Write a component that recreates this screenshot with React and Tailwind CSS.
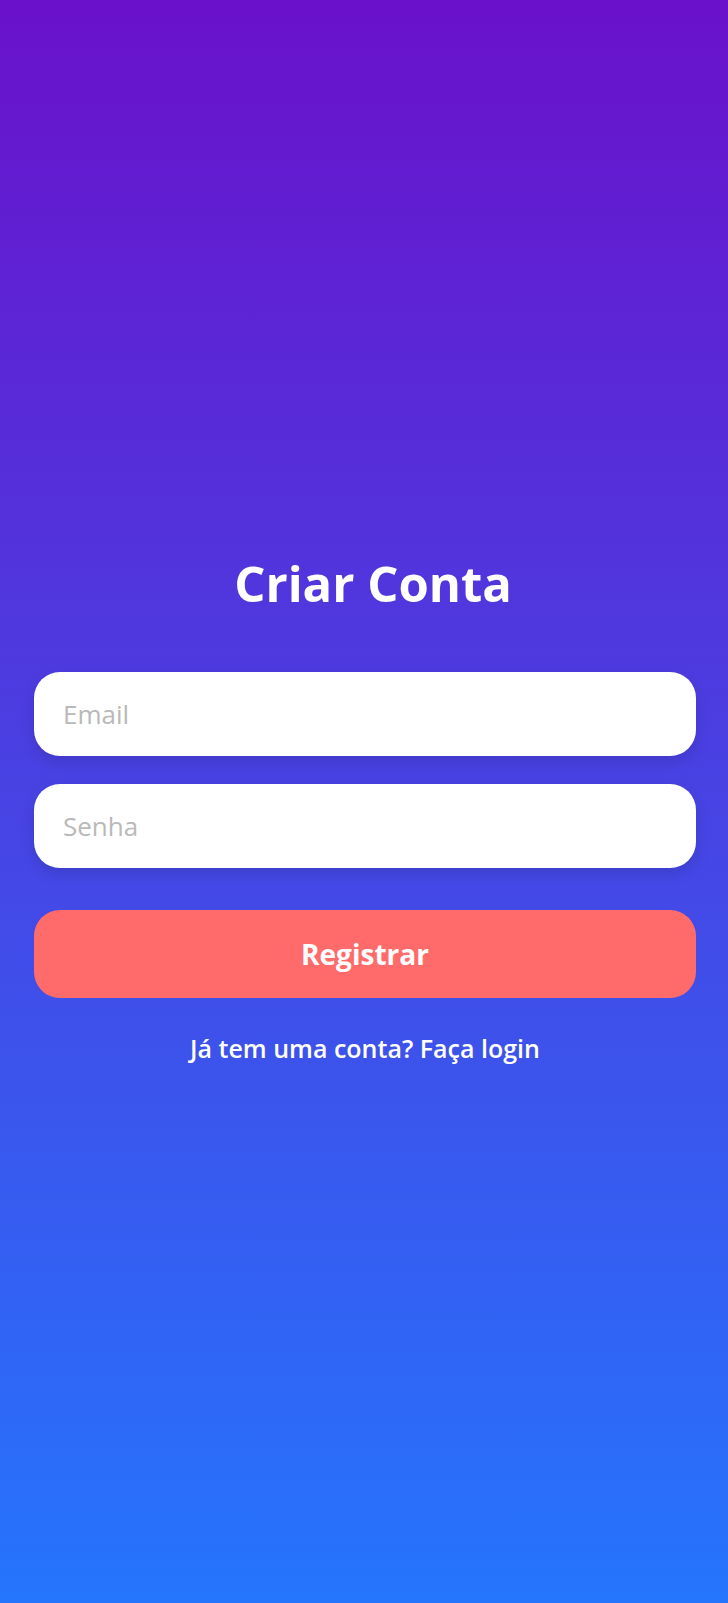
import React from "react";

export default function App() {
  return (
    <div
      className="min-h-screen w-full bg-[linear-gradient(to_bottom,#6a11cb,#2575fc)] flex flex-col items-center justify-center pl-[34px] pr-[32px] pt-4"
      style={{ fontFamily: '"Open Sans", "Noto Sans", sans-serif' }}
    >
      <div className="w-full flex flex-col">
        <h1 className="text-center text-white font-bold text-[49px] leading-[60px] mb-[59px] pl-[16px]">
          Criar Conta
        </h1>
        <input
          type="email"
          placeholder="Email"
          className="w-full h-[84px] rounded-[26px] bg-white px-[29px] text-[26px] text-gray-800 placeholder:text-[#b9b9b9] outline-none shadow-[0_6px_14px_rgba(0,0,0,0.12)]"
        />
        <input
          type="password"
          placeholder="Senha"
          className="mt-[28px] w-full h-[84px] rounded-[26px] bg-white px-[29px] text-[26px] text-gray-800 placeholder:text-[#b9b9b9] outline-none shadow-[0_6px_14px_rgba(0,0,0,0.12)]"
        />
        <button className="mt-[42px] w-full h-[88px] rounded-[26px] bg-[#ff6b6b] text-white font-bold text-[28px]">
          Registrar
        </button>
        <p className="mt-[32px] text-center text-white font-semibold text-[25px] leading-[36px]">
          Já tem uma conta? Faça login
        </p>
      </div>
    </div>
  );
}
